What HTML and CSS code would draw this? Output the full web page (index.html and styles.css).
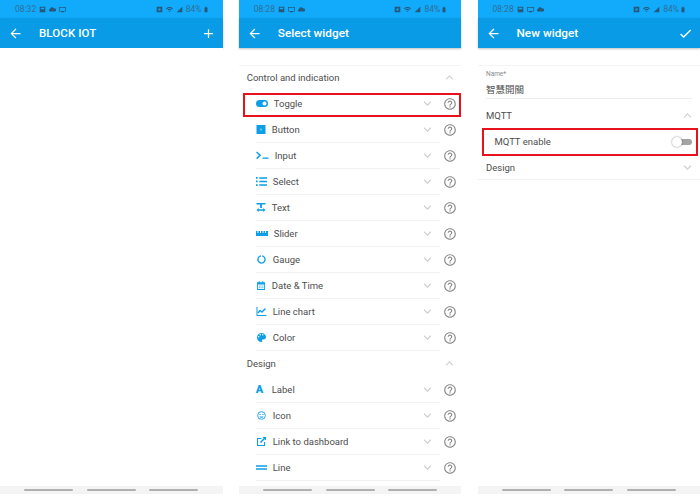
FILE: index.html
```html
<!DOCTYPE html>
<html lang="en">
<head>
    <meta charset="UTF-8">
    <title>BLOCK IOT widgets</title>
    <link rel="stylesheet" href="styles.css">
</head>
<body>
    <!-- Shared icons -->
    <svg class="sprite" aria-hidden="true">
        <symbol id="i-back" viewBox="0 0 24 24"><path d="M20 11H7.83l5.59-5.59L12 4l-8 8 8 8 1.41-1.41L7.83 13H20v-2z"/></symbol>
        <symbol id="i-down" viewBox="0 0 24 24"><path d="M16.59 8.59L12 13.17 7.41 8.59 6 10l6 6 6-6z"/></symbol>
        <symbol id="i-up" viewBox="0 0 24 24"><path d="M12 8l-6 6 1.41 1.41L12 10.83l4.59 4.58L18 14z"/></symbol>
        <symbol id="i-help" viewBox="0 0 24 24"><path d="M11 18h2v-2h-2v2zm1-16C6.48 2 2 6.48 2 12s4.48 10 10 10 10-4.48 10-10S17.52 2 12 2zm0 18c-4.41 0-8-3.59-8-8s3.59-8 8-8 8 3.59 8 8-3.59 8-8 8zm0-14c-2.21 0-4 1.79-4 4h2c0-1.1.9-2 2-2s2 .9 2 2c0 2-3 1.75-3 5h2c0-2.25 3-2.5 3-5 0-2.21-1.79-4-4-4z"/></symbol>
        <symbol id="s-photo" viewBox="0 0 10 10"><path d="M1 1h8v8H1zM2.500 2.500v2h5v-2z" fill-rule="evenodd"/></symbol>
        <symbol id="s-cloud" viewBox="0 0 10 10"><path d="M1 8a2 2 0 0 1 .4-3.600A3 3 0 0 1 7 3.500 2.300 2.300 0 0 1 8.500 8z"/></symbol>
        <symbol id="s-screen" viewBox="0 0 10 10"><path d="M0 1.500h10v6.500H7v1H3V8H0zM1 2.500V7h8V2.500z" fill-rule="evenodd"/></symbol>
        <symbol id="s-alarm" viewBox="0 0 10 10"><path d="M1 1h8v8H1zM3.500 3.500v3h3v-3z" fill-rule="evenodd"/></symbol>
        <symbol id="s-wifi" viewBox="0 0 10 10"><path d="M0 3.500a7 7 0 0 1 10 0L9 4.500a6 6 0 0 0-8 0zM2 5.500a4.300 4.300 0 0 1 6 0L7 6.500a3 3 0 0 0-4 0zM5 7l1 1-1 1-1-1z"/></symbol>
        <symbol id="s-signal" viewBox="0 0 10 10"><path d="M9 1v8H1z"/></symbol>
        <symbol id="s-battery" viewBox="0 0 10 10"><path d="M4 .5h2v1h1.500v8h-5v-8H4z"/></symbol>
    </svg>

    <!-- Screen 1: dashboard -->
    <section class="phone">
        <div class="status-bar">
            <span class="status-left">08:32
                <svg class="status-icon"><use href="#s-photo"/></svg>
                <svg class="status-icon"><use href="#s-cloud"/></svg>
                <svg class="status-icon"><use href="#s-screen"/></svg>
            </span>
            <span class="status-right">
                <svg class="status-icon"><use href="#s-alarm"/></svg>
                <svg class="status-icon"><use href="#s-wifi"/></svg>
                <svg class="status-icon"><use href="#s-signal"/></svg>
                84%<svg class="status-icon battery"><use href="#s-battery"/></svg>
            </span>
        </div>
        <header class="app-bar">
            <svg class="bar-icon"><use href="#i-back"/></svg>
            <h1 class="app-title caps">BLOCK IOT</h1>
            <svg class="bar-action" viewBox="0 0 24 24"><path d="M19 13h-6v6h-2v-6H5v-2h6V5h2v6h6v2z"/></svg>
        </header>
        <main class="content"></main>
        <div class="nav-bar"><i></i><i></i><i></i></div>
    </section>

    <!-- Screen 2: widget picker -->
    <section class="phone">
        <div class="status-bar">
            <span class="status-left">08:28
                <svg class="status-icon"><use href="#s-photo"/></svg>
                <svg class="status-icon"><use href="#s-screen"/></svg>
                <svg class="status-icon"><use href="#s-cloud"/></svg>
            </span>
            <span class="status-right">
                <svg class="status-icon"><use href="#s-alarm"/></svg>
                <svg class="status-icon"><use href="#s-wifi"/></svg>
                <svg class="status-icon"><use href="#s-signal"/></svg>
                84%<svg class="status-icon battery"><use href="#s-battery"/></svg>
            </span>
        </div>
        <header class="app-bar">
            <svg class="bar-icon"><use href="#i-back"/></svg>
            <h1 class="app-title">Select widget</h1>
        </header>
        <main class="content list">
            <div class="group-head">Control and indication <svg class="chevron up"><use href="#i-up"/></svg></div>

            <div class="widget-row">
                <span class="widget-name">
                    <svg class="widget-icon w12" viewBox="0 0 12 8"><rect y="0.500" width="12" height="7" rx="3.500"/><circle cx="8.500" cy="4" r="2" fill="#fff"/></svg>
                    Toggle
                </span>
                <svg class="chevron"><use href="#i-down"/></svg>
                <svg class="help"><use href="#i-help"/></svg>
            </div>
            <div class="widget-row">
                <span class="widget-name">
                    <svg class="widget-icon w10" viewBox="0 0 8 8"><rect width="8" height="8" rx="0.500"/><rect x="3.200" y="3.200" width="1.600" height="1.600" fill="#7ccbf5"/></svg>
                    Button
                </span>
                <svg class="chevron"><use href="#i-down"/></svg>
                <svg class="help"><use href="#i-help"/></svg>
            </div>
            <div class="widget-row">
                <span class="widget-name">
                    <svg class="widget-icon w13" viewBox="0 0 13 9"><path d="M.6 1l3.500 3.300L.6 7.600" fill="none" stroke="#0d9ee8" stroke-width="1.500"/><rect x="6.500" y="6.500" width="6" height="1.300"/></svg>
                    Input
                </span>
                <svg class="chevron"><use href="#i-down"/></svg>
                <svg class="help"><use href="#i-help"/></svg>
            </div>
            <div class="widget-row">
                <span class="widget-name">
                    <svg class="widget-icon w11" viewBox="0 0 10 8"><path d="M0 0h1.500v1.500H0zM0 3.200h1.500v1.500H0zM0 6.500h1.500V8H0zM3 .2h7v1.200H3zM3 3.400h7v1.200H3zM3 6.600h7v1.200H3z"/></svg>
                    Select
                </span>
                <svg class="chevron"><use href="#i-down"/></svg>
                <svg class="help"><use href="#i-help"/></svg>
            </div>
            <div class="widget-row">
                <span class="widget-name">
                    <svg class="widget-icon w10" viewBox="0 0 9 9"><path d="M0 0h9v1.500H5.400v3.500H3.600V1.500H0zM2.200 5v1.200h4.600V5L9 7 6.800 9V7.800H2.200V9L0 7z"/></svg>
                    Text
                </span>
                <svg class="chevron"><use href="#i-down"/></svg>
                <svg class="help"><use href="#i-help"/></svg>
            </div>
            <div class="widget-row">
                <span class="widget-name">
                    <svg class="widget-icon w12" viewBox="0 0 12 5"><path d="M0 0h1.500v2h1V0H4v2h1V0h1.500v2h1V0H9v2h1V0h2v5H0z"/></svg>
                    Slider
                </span>
                <svg class="chevron"><use href="#i-down"/></svg>
                <svg class="help"><use href="#i-help"/></svg>
            </div>
            <div class="widget-row">
                <span class="widget-name">
                    <svg class="widget-icon w11" viewBox="0 0 10 10"><path d="M5.600 1a4 4 0 1 1-1.200 0" fill="none" stroke="#0d9ee8" stroke-width="1.500"/></svg>
                    Gauge
                </span>
                <svg class="chevron"><use href="#i-down"/></svg>
                <svg class="help"><use href="#i-help"/></svg>
            </div>
            <div class="widget-row">
                <span class="widget-name">
                    <svg class="widget-icon w10" viewBox="0 0 9 10"><path d="M0 1.500h2V0h1v1.500h3V0h1v1.500h2V10H0zM1 4v5h7V4zM2 5h1v1H2zM4 5h1v1H4zM6 5h1v1H6zM2 7h1v1H2zM4 7h1v1H4zM6 7h1v1H6z"/></svg>
                    Date &amp; Time
                </span>
                <svg class="chevron"><use href="#i-down"/></svg>
                <svg class="help"><use href="#i-help"/></svg>
            </div>
            <div class="widget-row">
                <span class="widget-name">
                    <svg class="widget-icon w11" viewBox="0 0 10 9"><path d="M0 0h1v8h9v1H0z"/><path d="M1.500 6l2-2.500 2 1.500L9 1.500" fill="none" stroke="#0d9ee8" stroke-width="1.400"/></svg>
                    Line chart
                </span>
                <svg class="chevron"><use href="#i-down"/></svg>
                <svg class="help"><use href="#i-help"/></svg>
            </div>
            <div class="widget-row">
                <span class="widget-name">
                    <svg class="widget-icon w11" viewBox="3 3 18 18"><path d="M12 3a9 9 0 0 0 0 18c.83 0 1.500-.67 1.500-1.500 0-.39-.15-.74-.39-1.010-.23-.26-.38-.61-.38-.99 0-.83.67-1.500 1.500-1.500H16c2.760 0 5-2.240 5-5 0-4.420-4.030-8-9-8zm-5.500 9c-.83 0-1.500-.67-1.500-1.500S5.670 9 6.500 9 8 9.670 8 10.500 7.330 12 6.500 12zm3-4C8.670 8 8 7.330 8 6.500S8.670 5 9.500 5s1.500.67 1.500 1.500S10.330 8 9.500 8zm5 0c-.83 0-1.500-.67-1.500-1.500S13.670 5 14.500 5s1.500.67 1.500 1.500S15.330 8 14.500 8z" fill-rule="evenodd"/></svg>
                    Color
                </span>
                <svg class="chevron"><use href="#i-down"/></svg>
                <svg class="help"><use href="#i-help"/></svg>
            </div>

            <div class="group-head design-head">Design <svg class="chevron up"><use href="#i-up"/></svg></div>

            <div class="widget-row">
                <span class="widget-name">
                    <b class="letter-icon">A</b>
                    Label
                </span>
                <svg class="chevron"><use href="#i-down"/></svg>
                <svg class="help"><use href="#i-help"/></svg>
            </div>
            <div class="widget-row">
                <span class="widget-name">
                    <svg class="widget-icon w11" viewBox="0 0 10 10"><circle cx="5" cy="5" r="4.300" fill="none" stroke="#0d9ee8"/><path d="M2.600 3.600h1.600v.8H2.600zM5.800 3.600h1.600v.8H5.800zM2.800 6h4.400a2.300 2.300 0 0 1-4.400 0z"/></svg>
                    Icon
                </span>
                <svg class="chevron"><use href="#i-down"/></svg>
                <svg class="help"><use href="#i-help"/></svg>
            </div>
            <div class="widget-row">
                <span class="widget-name">
                    <svg class="widget-icon w11" viewBox="0 0 10 10"><path d="M0 1h5v1.200H1.200v6.600h6.600V5.500H9V10H0z"/><path d="M6 0h4v4L8.600 2.600 4.500 6.700 3.300 5.500l4.100-4.100z"/></svg>
                    Link to dashboard
                </span>
                <svg class="chevron"><use href="#i-down"/></svg>
                <svg class="help"><use href="#i-help"/></svg>
            </div>
            <div class="widget-row">
                <span class="widget-name">
                    <svg class="widget-icon w11" viewBox="0 0 10 4"><path d="M0 0h10v1.300H0zM0 2.700h10V4H0z"/></svg>
                    Line
                </span>
                <svg class="chevron"><use href="#i-down"/></svg>
                <svg class="help"><use href="#i-help"/></svg>
            </div>

            <div class="highlight toggle-mark"></div>
        </main>
        <div class="nav-bar"><i></i><i></i><i></i></div>
    </section>

    <!-- Screen 3: new widget form -->
    <section class="phone">
        <div class="status-bar">
            <span class="status-left">08:28
                <svg class="status-icon"><use href="#s-photo"/></svg>
                <svg class="status-icon"><use href="#s-screen"/></svg>
                <svg class="status-icon"><use href="#s-cloud"/></svg>
            </span>
            <span class="status-right">
                <svg class="status-icon"><use href="#s-alarm"/></svg>
                <svg class="status-icon"><use href="#s-wifi"/></svg>
                <svg class="status-icon"><use href="#s-signal"/></svg>
                84%<svg class="status-icon battery"><use href="#s-battery"/></svg>
            </span>
        </div>
        <header class="app-bar">
            <svg class="bar-icon"><use href="#i-back"/></svg>
            <h1 class="app-title">New widget</h1>
            <svg class="bar-action" viewBox="0 0 24 24"><path d="M9 16.170L4.830 12l-1.420 1.410L9 19 21 7l-1.410-1.410z"/></svg>
        </header>
        <main class="content list">
            <div class="name-field">
                <label class="field-label">Name*</label>
                <div class="field-value">智慧開關</div>
            </div>
            <div class="group-head form-head">MQTT <svg class="chevron up"><use href="#i-up"/></svg></div>
            <div class="option-row">
                MQTT enable
                <span class="switch"></span>
            </div>
            <div class="group-head form-head closed">Design <svg class="chevron"><use href="#i-down"/></svg></div>

            <div class="highlight mqtt-mark"></div>
        </main>
        <div class="nav-bar"><i></i><i></i><i></i></div>
    </section>
</body>
</html>
```

FILE: styles.css
```css
* {
    margin: 0;
    padding: 0;
    box-sizing: border-box;
}

body {
    font-family: Roboto, 'Noto Sans CJK TC', sans-serif;
    background: white;
    width: 700px;
    height: 497px;
    display: flex;
    justify-content: space-between;
    overflow: hidden;
    color: #4d4d4d;
}

.sprite {
    display: none;
}

.phone {
    width: 222.5px;
    height: 494px;
    display: flex;
    flex-direction: column;
}

.status-bar {
    height: 18px;
    background: #12aafa;
    display: flex;
    align-items: center;
    justify-content: space-between;
    padding: 0 14px 0 15px;
    font-size: 8.5px;
    color: #2f6f98;
}

.status-left,
.status-right {
    display: flex;
    align-items: center;
    gap: 3px;
}

.status-icon {
    width: 7px;
    height: 7px;
    fill: #27587a;
}

.status-icon.battery {
    width: 6px;
    margin-left: -2px;
}

.app-bar {
    height: 30px;
    background: #0a9be6;
    display: flex;
    align-items: center;
    padding: 0 7px 0 8px;
    box-shadow: 0 1px 2px rgba(0, 0, 0, 0.25);
    color: white;
    position: relative;
}

.bar-icon {
    width: 15px;
    height: 15px;
    fill: white;
}

.bar-action {
    width: 15px;
    height: 15px;
    fill: white;
    margin-left: auto;
}

.app-title {
    font-size: 11.8px;
    font-weight: 500;
    margin-left: 16px;
}

.app-title.caps {
    font-size: 11.5px;
    letter-spacing: 0.1px;
}

.content {
    flex: 1;
    background: white;
    position: relative;
}

.list {
    margin-top: 17px;
    border-top: 1px solid #f4f4f4;
}

.group-head {
    height: 25px;
    display: flex;
    align-items: center;
    justify-content: space-between;
    padding: 0 4.5px 1.5px 8px;
    font-size: 9.5px;
    color: #4d4d4d;
}

.design-head {
    height: 26px;
}

.group-head .chevron.up {
    fill: #d4d4d4;
}

.widget-row {
    height: 26px;
    margin-left: 17px;
    margin-right: 21px;
    display: flex;
    align-items: center;
    justify-content: space-between;
    border-bottom: 1px solid #f1f1f1;
    position: relative;
    padding-right: 5px;
}

.widget-name {
    display: flex;
    align-items: center;
    gap: 6px;
    font-size: 9.5px;
}

.widget-icon {
    height: 9px;
    fill: #0d9ee8;
    flex-shrink: 0;
}

.w10 { width: 10px; }
.w11 { width: 11px; }
.w12 { width: 12px; }
.w13 { width: 13px; }

.letter-icon {
    font-size: 11px;
    line-height: 1;
    width: 10px;
    font-weight: 900;
    color: #0d9ee8;
}

.chevron {
    width: 15px;
    height: 15px;
    fill: #d0d0d0;
}

.help {
    width: 14px;
    height: 14px;
    fill: #8a8a8a;
    position: absolute;
    right: -16.5px;
    top: 5.5px;
}

.highlight {
    position: absolute;
    border: 2px solid #e8121c;
}

.toggle-mark {
    left: 4px;
    right: 0;
    top: 26.5px;
    height: 24.5px;
}

.mqtt-mark {
    left: 4.5px;
    right: 2px;
    top: 62px;
    height: 28px;
}

.name-field {
    margin: 0 8.5px;
    height: 33px;
    padding-top: 4px;
    border-bottom: 1px solid #ececec;
}

.field-label {
    display: block;
    font-size: 6.5px;
    color: #8a8a8a;
    line-height: 8px;
}

.field-value {
    font-size: 9.5px;
    line-height: 14px;
    margin-top: 5px;
}

.form-head {
    padding: 0 5px 0 8.5px;
    height: 33px;
}

.option-row {
    height: 25px;
    margin: -3px 8.5px 0 17px;
    display: flex;
    align-items: center;
    justify-content: space-between;
    font-size: 9.5px;
}

.form-head.closed {
    height: 26px;
    padding-top: 1.5px;
    border-bottom: 1px solid #f1f1f1;
}

.switch {
    width: 20px;
    height: 10px;
    position: relative;
}

.switch::before {
    content: "";
    position: absolute;
    left: 6px;
    right: 0;
    top: 2px;
    height: 6px;
    border-radius: 3px;
    background: #a4a4a4;
}

.switch::after {
    content: "";
    position: absolute;
    left: 0;
    top: 0;
    width: 10px;
    height: 10px;
    border-radius: 50%;
    background: white;
    box-shadow: 0 0 2px rgba(0, 0, 0, 0.5);
}

.nav-bar {
    height: 8px;
    background: #f4f4f4;
    display: flex;
    align-items: center;
    justify-content: center;
    gap: 13.5px;
}

.nav-bar i {
    width: 49px;
    height: 2px;
    background: #b0b0b0;
    border-radius: 1px;
}
```
